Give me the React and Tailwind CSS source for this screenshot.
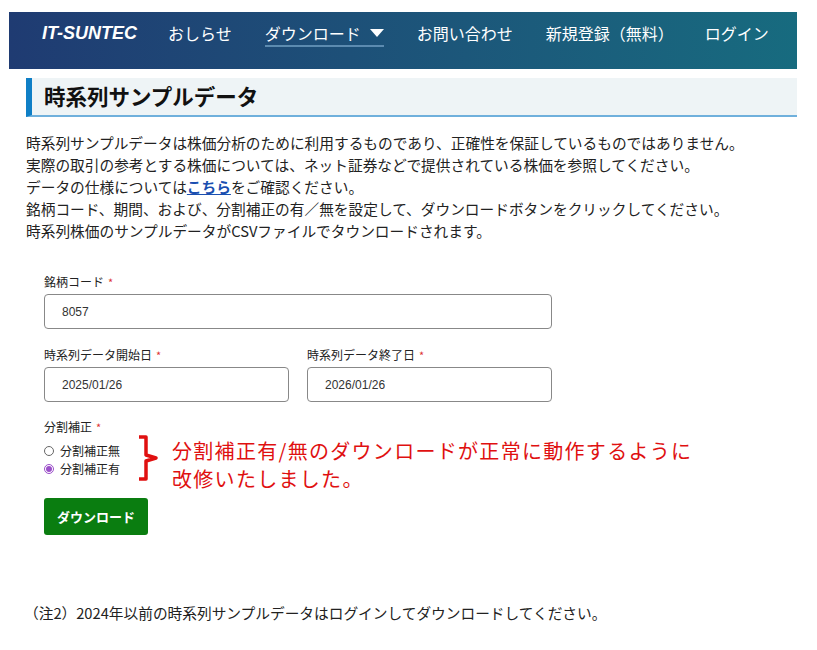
import React from 'react';

const Req = () => <span className="text-[#d33] ml-1 text-[11px]">*</span>;

const App = () => {
  return (
    <div className="w-[817px] h-[650px] bg-white text-[#222] font-['Noto_Sans_CJK_JP','Noto_Sans',sans-serif] pt-3">
      {/* Header */}
      <header className="ml-[9px] w-[788px] h-[57px] bg-gradient-to-r from-[#1f3b72] to-[#176b7f] flex items-start pt-[9px] pl-[33px] text-white">
        <div className="font-['Liberation_Sans',sans-serif] italic font-bold text-[18px] leading-[24px] mr-[31px]">IT-SUNTEC</div>
        <nav className="flex items-start text-[16px] leading-[24px]">
          <span className="mr-[33px]">おしらせ</span>
          <span className="mr-[33px] flex items-center border-b-2 border-[#5c8bb0]">
            ダウンロード
            <svg width="14" height="10" viewBox="0 0 14 10" className="ml-[9px]">
              <path d="M0 1 L14 1 L7 9 Z" fill="white" />
            </svg>
          </span>
          <span className="mr-[33px]">お問い合わせ</span>
          <span className="mr-[31px]">新規登録（無料）</span>
          <span>ログイン</span>
        </nav>
      </header>

      {/* Title */}
      <div className="ml-[26px] w-[771px] mt-[9px] h-[39px] bg-[#eef4f6] border-l-[6px] border-[#0f7fc6] border-b-2 border-b-[#6fb0dc] flex items-center pl-[12px]">
        <h1 className="text-[21.5px] font-bold text-[#111]">時系列サンプルデータ</h1>
      </div>

      {/* Description */}
      <div className="ml-[26px] mt-[15px] text-[14.7px] leading-[22px]">
        <p>時系列サンプルデータは株価分析のために利用するものであり、正確性を保証しているものではありません。</p>
        <p>実際の取引の参考とする株価については、ネット証券などで提供されている株価を参照してください。</p>
        <p>データの仕様については<a className="text-[#1a4fb0] underline font-bold">こちら</a>をご確認ください。</p>
        <p>銘柄コード、期間、および、分割補正の有／無を設定して、ダウンロードボタンをクリックしてください。</p>
        <p>時系列株価のサンプルデータがCSVファイルでタウンロードされます。</p>
      </div>

      {/* Form */}
      <div className="ml-[44px] mt-[32px] text-[12px]">
        <label className="block leading-[16px]">銘柄コード<Req /></label>
        <div className="mt-[4px] w-[508px] h-[35px] border border-[#888] rounded-[4px] flex items-center pl-[17px] font-['Liberation_Sans',sans-serif] text-[12px] text-[#333]">8057</div>

        <div className="flex gap-[18px] mt-[18px]">
          <div>
            <label className="block leading-[16px]">時系列データ開始日<Req /></label>
            <div className="mt-[4px] w-[245px] h-[35px] border border-[#888] rounded-[4px] flex items-center pl-[17px] font-['Liberation_Sans',sans-serif] text-[#333]">2025/01/26</div>
          </div>
          <div>
            <label className="block leading-[16px]">時系列データ終了日<Req /></label>
            <div className="mt-[4px] w-[245px] h-[35px] border border-[#888] rounded-[4px] flex items-center pl-[17px] font-['Liberation_Sans',sans-serif] text-[#333]">2026/01/26</div>
          </div>
        </div>

        <div className="flex mt-[17px]">
          <div>
            <label className="block leading-[16px]">分割補正<Req /></label>
            <div className="mt-[7px] flex items-center leading-[18px]">
              <span className="w-[10px] h-[10px] rounded-full border border-[#666] mr-[6px]" />
              分割補正無
            </div>
            <div className="flex items-center leading-[18px]">
              <span className="w-[10px] h-[10px] rounded-full border border-[#9b4fc9] mr-[6px] flex items-center justify-center">
                <span className="w-[6px] h-[6px] rounded-full bg-[#9b4fc9]" />
              </span>
              分割補正有
            </div>
          </div>
          <svg width="22" height="46" viewBox="0 0 22 46" className="ml-[17px] mt-[16px]">
            <path d="M2 2 H9 V20 L19 23 L9 26 V44 H2" fill="none" stroke="#e01010" strokeWidth="3.5" strokeLinejoin="round" />
          </svg>
          <div className="ml-[13px] mt-[18px] text-[#e01010] text-[20px] leading-[28px] tracking-[1.3px]">
            <p>分割補正有/無のダウンロードが正常に動作するように</p>
            <p>改修いたしました。</p>
          </div>
        </div>

        <button className="mt-[5px] w-[104px] h-[37px] bg-[#0a7d10] text-white rounded-[3px] text-[13px] font-bold">ダウンロード</button>
      </div>

      <p className="ml-[24px] mt-[67px] text-[14.7px]">（注2）2024年以前の時系列サンプルデータはログインしてダウンロードしてください。</p>
    </div>
  );
};

export default App;
